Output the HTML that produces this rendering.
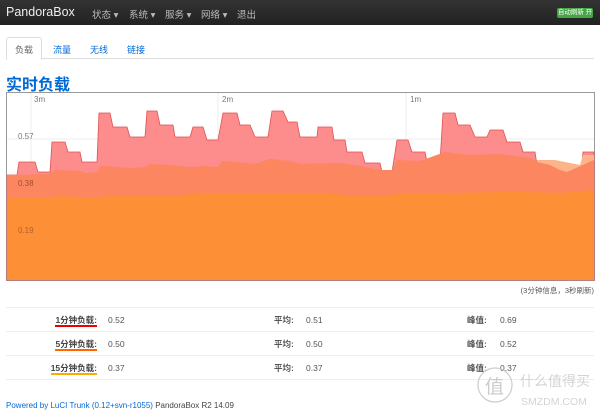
<!DOCTYPE html>
<html><head><meta charset="utf-8"><style>
*{margin:0;padding:0;box-sizing:border-box}
body{width:600px;height:417px;background:#fff;font-family:"Liberation Sans","Noto Sans CJK SC",sans-serif;position:relative;overflow:hidden}
.nav{height:25px;background:linear-gradient(#333,#222);position:relative;color:#bbb;font-size:9.5px}
.brand{position:absolute;left:6px;top:5px;color:#eee;font-size:12.5px}
.menu span{position:absolute;top:7px}
.badge{position:absolute;left:557px;top:8px;width:36px;height:10px;background:#46a546;color:#fff;font-size:6.5px;line-height:10px;text-align:center;border-radius:2px;white-space:nowrap;overflow:hidden}
.tabs{position:absolute;top:37px;left:6px;width:588px;height:22px;border-bottom:1px solid #ddd;font-size:9px}
.tabs span{position:absolute;top:6px;color:#0069d6}
.tab1{position:absolute;left:0;top:0;width:36px;height:23px;border:1px solid #ddd;border-bottom-color:#fff;background:#fff;border-radius:3px 3px 0 0}
h2{position:absolute;left:6px;top:71px;font-size:16px;color:#0069d6;font-weight:bold}
.chart{position:absolute;left:6px;top:92px}
.note{position:absolute;right:6px;top:285px;font-size:7.5px;color:#555}
.row{position:absolute;left:6px;width:588px;height:24px;border-top:1px solid #eee;font-size:8.5px;color:#555}
.row div{position:absolute;top:7px;line-height:10px}
.l{right:497px;font-weight:bold;color:#444;border-bottom:2px solid}
.foot{position:absolute;left:6px;top:401px;font-size:8px;color:#444}
.foot a{color:#0069d6}
</style></head><body>
<div class="nav"><div class="brand">PandoraBox</div>
<div class="menu"><span style="left:92px">状态 ▾</span><span style="left:129px">系统 ▾</span><span style="left:165px">服务 ▾</span><span style="left:201px">网络 ▾</span><span style="left:237px">退出</span></div>
<div class="badge">自动刷新 开</div></div>
<div class="tabs"><div class="tab1"></div><span style="left:9px;color:#666">负载</span><span style="left:47px">流量</span><span style="left:84px">无线</span><span style="left:121px">链接</span></div>
<h2>实时负载</h2>
<svg class="chart" width="589" height="190" viewBox="6 92 589 190">
<rect x="6.5" y="92.5" width="588" height="188" fill="#fff" stroke="#999"/>
<line x1="31" y1="93" x2="31" y2="280" stroke="#eee"/><line x1="218" y1="93" x2="218" y2="280" stroke="#eee"/><line x1="406" y1="93" x2="406" y2="280" stroke="#eee"/>
<line x1="7" y1="139" x2="594" y2="139" stroke="#eee"/>
<polygon fill="#fd8c8c" stroke="#e05050" stroke-width="0.8" points="7,175 17,175 19,162 35,162 38,172 50,172 52,142 65,142 68,152 80,152 82,162 97,162 99,113 110,113 113,127 127,127 130,137 145,137 147,111 157,111 160,125 173,125 175,137 190,137 193,127 203,127 207,140 218,140 223,113 237,113 240,125 250,125 255,137 268,137 272,111 283,111 288,122 297,122 300,137 317,137 318,127 332,127 334,140 345,140 347,152 362,152 365,163 380,163 382,172 392,172 397,140 408,140 412,152 425,152 427,162 440,162 443,113 455,113 458,125 470,125 475,137 487,137 490,130 503,130 507,142 520,142 523,152 535,152 537,165 550,165 553,172 567,172 570,182 580,182 583,152 594,152 594,280 7,280"/>
<polygon fill="#fdb48a" points="537,160 555,160 570,163 580,165 583,155 594,155 594,280 537,280"/>
<polygon fill="#fc8660" points="7,175 50,174 55,170 80,171 85,173 97,172 100,166 120,167 130,168 145,167 150,164 170,165 190,167 205,166 218,167 222,161 235,162 255,164 270,159 290,161 300,164 340,163 360,166 380,170 392,170 397,160 420,161 445,152 470,155 500,154 530,158 537,162 550,165 560,170 567,172 594,160 594,280 7,280"/>
<polygon fill="#fd8f36" points="7,198 45,198 60,196 100,198 110,195 150,196 200,194 230,194 260,193 300,194 330,194 370,196 400,194 450,193 500,192 530,192 560,193 594,190 594,280 7,280"/>
<g font-size="8" fill="#777" font-family="Liberation Sans,sans-serif"><text x="34" y="102">3m</text><text x="222" y="102">2m</text><text x="410" y="102">1m</text><text x="18" y="139">0.57</text><text x="18" y="186" fill="#a05030">0.38</text><text x="18" y="233" fill="#b0602a">0.19</text></g>
</svg>
<div class="note">(3分钟信息，3秒刷新)</div>
<div class="row" style="top:307px"><div class="l" style="border-color:#e00">1分钟负载:</div><div style="left:102px">0.52</div><div style="left:268px;font-weight:bold">平均:</div><div style="left:300px">0.51</div><div style="left:461px;font-weight:bold">峰值:</div><div style="left:494px">0.69</div></div>
<div class="row" style="top:331px"><div class="l" style="border-color:#f60">5分钟负载:</div><div style="left:102px">0.50</div><div style="left:268px;font-weight:bold">平均:</div><div style="left:300px">0.50</div><div style="left:461px;font-weight:bold">峰值:</div><div style="left:494px">0.52</div></div>
<div class="row" style="top:355px"><div class="l" style="border-color:#fa0">15分钟负载:</div><div style="left:102px">0.37</div><div style="left:268px;font-weight:bold">平均:</div><div style="left:300px">0.37</div><div style="left:461px;font-weight:bold">峰值:</div><div style="left:494px">0.37</div></div>
<div class="row" style="top:379px;height:1px"></div>
<div class="foot"><a>Powered by LuCI Trunk (0.12+svn-r1055)</a> PandoraBox R2 14.09</div>
<svg style="position:absolute;left:470px;top:362px" width="130" height="55"><circle cx="25" cy="23" r="17" fill="none" stroke="#ccc" stroke-width="1.2"/><text x="15" y="31" font-size="19" fill="#ccc" font-family="Noto Sans CJK SC">值</text><text x="50" y="24" font-size="14" fill="#d4d4d4" font-family="Noto Sans CJK SC">什么值得买</text><text x="51" y="43" font-size="10.5" fill="#d4d4d4" font-family="Liberation Sans">SMZDM.COM</text></svg>
</body></html>
